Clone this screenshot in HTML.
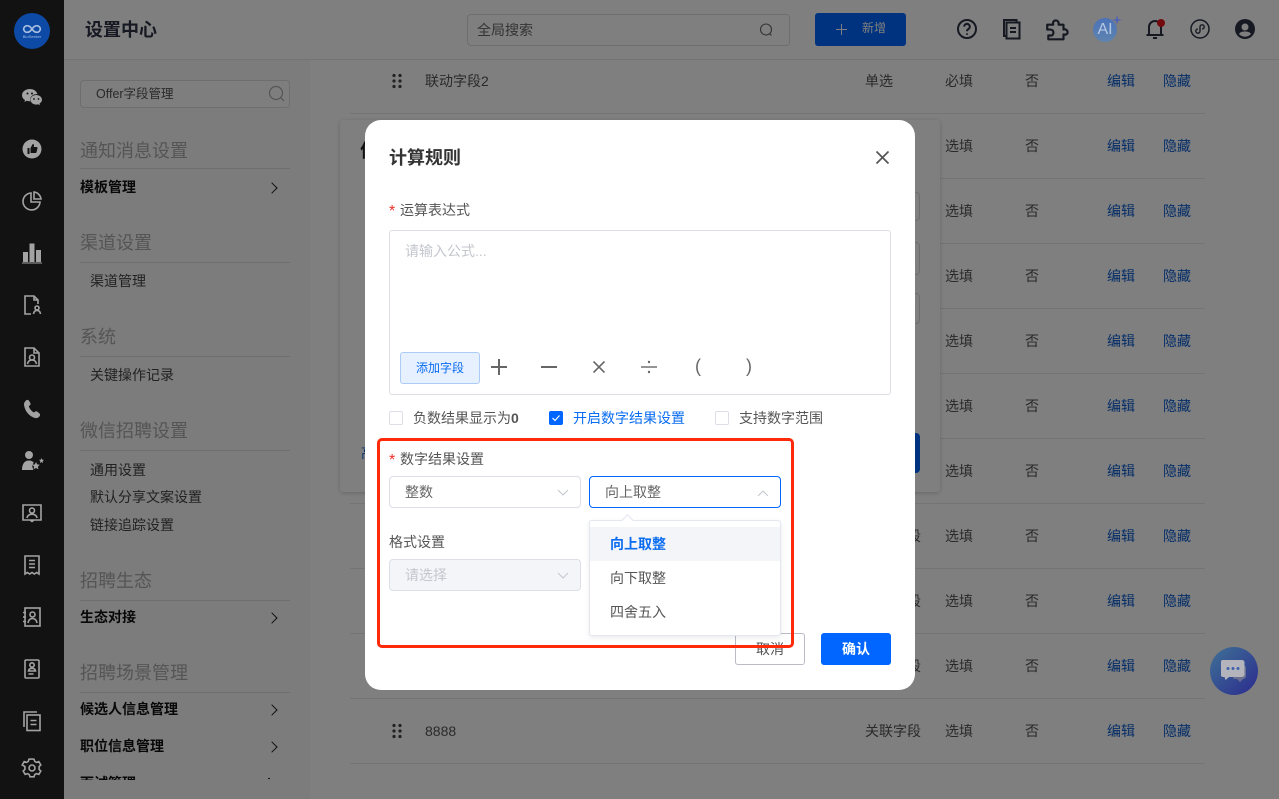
<!DOCTYPE html>
<html lang="zh"><head><meta charset="utf-8"><title>设置中心</title>
<style>
*{box-sizing:border-box}
html,body{margin:0;padding:0}
body{width:1279px;height:799px;overflow:hidden;position:relative;background:#fff;font-family:"Liberation Sans","Noto Sans CJK SC",sans-serif;color:#333;font-size:14px}
.a{position:absolute;white-space:nowrap}
.side{position:absolute;left:0;top:0;width:64px;height:799px;background:#121212;z-index:5}
.side svg{position:absolute;left:20px;width:24px;height:24px;fill:none;stroke:#a3a3a3;stroke-width:1.6}
.ov{position:absolute;inset:0;background:rgba(0,0,0,.5);z-index:3}
.nav{position:absolute;left:64px;top:60px;width:246px;height:739px;background:#f8f8fa;overflow:hidden}
.sec{position:absolute;left:16px;width:210px;height:32px;border-bottom:1px solid #ddd;color:#aaa;font-size:18px;line-height:26px;padding-top:1px}
.b{position:absolute;left:16px;font-weight:700;color:#111;line-height:20px}
.i{position:absolute;left:26px;color:#444;line-height:20px}
.chev{position:absolute;left:204px;width:8px;height:8px;border-top:1px solid #222;border-right:1px solid #222;transform:rotate(45deg)}
.line{position:absolute;left:350px;width:855px;height:1px;background:#e8e8ec}
.r{position:absolute;line-height:20px;color:#555;white-space:nowrap}
.l{color:#0a5cd0}
.top svg{position:absolute;top:17px;width:24px;height:24px;fill:none;stroke:#2c3344;stroke-width:2}
.top{position:absolute;inset:0}
.m{position:absolute;left:365px;top:120px;width:550px;height:570px;background:#fff;border-radius:16px;z-index:6}
.ab{position:absolute;white-space:nowrap;line-height:20px}
.sel{position:absolute;height:32px;width:192px;border:1px solid #dcdfe8;border-radius:4px;background:#fff;color:#666;line-height:30px;padding-left:15px}
.sel svg{position:absolute;right:10px;top:9px;width:14px;height:14px;fill:none;stroke:#c4c7d0;stroke-width:1}
.cb{position:absolute;top:291px;width:14px;height:14px;border:1px solid #dcdfe8;border-radius:2px;background:#fff}
</style></head><body>

<div class="nav">
  <div style="position:absolute;left:16px;top:20px;width:210px;height:28px;border:1px solid #ddd;border-radius:4px;background:#fcfcfd;color:#555;font-size:12.5px;line-height:27px;padding-left:15px">Offer字段管理
    <svg style="position:absolute;right:3px;top:4px" width="18" height="18" viewBox="0 0 18 18" fill="none" stroke="#aaa" stroke-width="1.2"><circle cx="8" cy="8" r="6.5"/><path d="M13 13l3 3"/></svg>
  </div>
  <div class="sec" style="top:77px">通知消息设置</div>
  <div class="b" style="top:117px">模板管理</div><div class="chev" style="top:124px"></div>
  <div class="sec" style="top:169px;height:34px">渠道设置</div>
  <div class="i" style="top:211px">渠道管理</div>
  <div class="sec" style="top:263px;height:34px">系统</div>
  <div class="i" style="top:305px">关键操作记录</div>
  <div class="sec" style="top:357px;height:34px">微信招聘设置</div>
  <div class="i" style="top:400px">通用设置</div>
  <div class="i" style="top:427px">默认分享文案设置</div>
  <div class="i" style="top:455px">链接追踪设置</div>
  <div class="sec" style="top:507px;height:34px">招聘生态</div>
  <div class="b" style="top:547px">生态对接</div><div class="chev" style="top:554px"></div>
  <div class="sec" style="top:599px;height:34px">招聘场景管理</div>
  <div class="b" style="top:639px">候选人信息管理</div><div class="chev" style="top:646px"></div>
  <div class="b" style="top:676px">职位信息管理</div><div class="chev" style="top:683px"></div>
  <div class="b" style="top:713px;height:7px;overflow:hidden">面试管理</div><div class="chev" style="top:718px;height:2px;border-right:0;transform:none;width:2px;border-top:1px solid #222"></div>
</div>

<div style="position:absolute;left:64px;top:59px;width:1215px;height:1px;background:#e9e9ec"></div>
<div class="a" style="left:85px;top:17px;font-size:18px;font-weight:700;color:#2c3344;line-height:26px">设置中心</div>
<div style="position:absolute;left:467px;top:14px;width:323px;height:32px;border:1px solid #ddd;border-radius:4px;color:#666;line-height:30px;padding-left:9px">全局搜索
  <svg style="position:absolute;right:16px;top:8px" width="14" height="14" viewBox="0 0 14 14" fill="none" stroke="#666" stroke-width="1.1"><circle cx="7" cy="6.5" r="5.5"/><path d="M10.5 10.5l2 2"/></svg>
</div>
<div style="position:absolute;left:815px;top:13px;width:91px;height:33px;background:#0066ff;border-radius:3px;color:#fff;font-size:12px;line-height:31px;padding-left:47px">新增
  <svg style="position:absolute;left:21px;top:11px" width="11" height="11" viewBox="0 0 11 11" stroke="#fff" stroke-width="1"><path d="M5.5 0v11M0 5.500h11"/></svg>
</div>

<div class="top">
  <svg style="left:955px" viewBox="0 0 24 24"><circle cx="12" cy="12" r="9"/><path d="M9.2 9.6a2.8 2.800 0 1 1 4.300 2.400c-1 .6-1.500 1.200-1.500 2.200"/><path d="M12 16.400v1.400"/></svg>
  <svg style="left:1000px" viewBox="0 0 24 24"><path d="M6 19H4V3h12.500v2.500"/><rect x="6.500" y="5.500" width="13" height="16"/><path d="M10 11h6M10 15h6"/></svg>
  <svg style="left:1044px;width:26px;height:26px;top:16px" viewBox="0 0 24 24"><path d="M3 8h5.500C7 3 14.500 2.500 13.500 8H18v4.500c4.500-1.500 5.500 6 0 4.500v4.500H4v-3.500h2.500c3 0 3-5.500-.5-5.500H3z" stroke-linejoin="round"/></svg>
  <svg style="left:1143px" viewBox="0 0 24 24"><path d="M6 18V10a6 6 0 0 1 12 0v8M3.500 18h17M10 21h4"/></svg>
  <div style="position:absolute;left:1157px;top:19px;width:8px;height:8px;border-radius:50%;background:#e8141c"></div>
  <svg style="left:1188px;stroke-width:1.5" viewBox="0 0 24 24"><circle cx="12" cy="12" r="9"/><path d="M8.800 12a2.100 2.100 0 1 0 2.200 2.100V9.900a2.100 2.100 0 1 1 2.100 2.100" stroke-width="1.400" transform="translate(1 0)"/></svg>
  <svg style="left:1233px;stroke:none;fill:#2c3344" viewBox="0 0 24 24"><path fill-rule="evenodd" d="M12 2a10 10 0 1 0 0 20 10 10 0 0 0 0-20zm0 4.500a3.500 3.500 0 1 1 0 7 3.500 3.500 0 0 1 0-7zM6 17c1-2 3.500-2.500 6-2.500s5 .5 6 2.500a8 8 0 0 1-12 0z"/></svg>
</div>

<div class="line" style="top:113px"></div><div class="line" style="top:178px"></div><div class="line" style="top:243px"></div><div class="line" style="top:308px"></div><div class="line" style="top:373px"></div><div class="line" style="top:438px"></div><div class="line" style="top:503px"></div><div class="line" style="top:568px"></div><div class="line" style="top:633px"></div><div class="line" style="top:698px"></div><div class="line" style="top:763px"></div>

<div class="r" style="left:425px;top:71px">联动字段2</div><div class="r" style="left:865px;top:71px">单选</div><div class="r" style="left:945px;top:71px">必填</div><div class="r" style="left:1025px;top:71px">否</div><div class="r l" style="left:1107px;top:71px">编辑</div><div class="r l" style="left:1163px;top:71px">隐藏</div>
<div class="r" style="left:945px;top:136px">选填</div><div class="r" style="left:1025px;top:136px">否</div><div class="r l" style="left:1107px;top:136px">编辑</div><div class="r l" style="left:1163px;top:136px">隐藏</div>
<div class="r" style="left:945px;top:201px">选填</div><div class="r" style="left:1025px;top:201px">否</div><div class="r l" style="left:1107px;top:201px">编辑</div><div class="r l" style="left:1163px;top:201px">隐藏</div>
<div class="r" style="left:945px;top:266px">选填</div><div class="r" style="left:1025px;top:266px">否</div><div class="r l" style="left:1107px;top:266px">编辑</div><div class="r l" style="left:1163px;top:266px">隐藏</div>
<div class="r" style="left:945px;top:331px">选填</div><div class="r" style="left:1025px;top:331px">否</div><div class="r l" style="left:1107px;top:331px">编辑</div><div class="r l" style="left:1163px;top:331px">隐藏</div>
<div class="r" style="left:945px;top:396px">选填</div><div class="r" style="left:1025px;top:396px">否</div><div class="r l" style="left:1107px;top:396px">编辑</div><div class="r l" style="left:1163px;top:396px">隐藏</div>
<div class="r" style="left:945px;top:461px">选填</div><div class="r" style="left:1025px;top:461px">否</div><div class="r l" style="left:1107px;top:461px">编辑</div><div class="r l" style="left:1163px;top:461px">隐藏</div>
<div class="r" style="left:865px;top:526px">关联字段</div><div class="r" style="left:945px;top:526px">选填</div><div class="r" style="left:1025px;top:526px">否</div><div class="r l" style="left:1107px;top:526px">编辑</div><div class="r l" style="left:1163px;top:526px">隐藏</div>
<div class="r" style="left:865px;top:591px">关联字段</div><div class="r" style="left:945px;top:591px">选填</div><div class="r" style="left:1025px;top:591px">否</div><div class="r l" style="left:1107px;top:591px">编辑</div><div class="r l" style="left:1163px;top:591px">隐藏</div>
<div class="r" style="left:865px;top:656px">关联字段</div><div class="r" style="left:945px;top:656px">选填</div><div class="r" style="left:1025px;top:656px">否</div><div class="r l" style="left:1107px;top:656px">编辑</div><div class="r l" style="left:1163px;top:656px">隐藏</div>
<div class="r" style="left:425px;top:721px">8888</div><div class="r" style="left:865px;top:721px">关联字段</div><div class="r" style="left:945px;top:721px">选填</div><div class="r" style="left:1025px;top:721px">否</div><div class="r l" style="left:1107px;top:721px">编辑</div><div class="r l" style="left:1163px;top:721px">隐藏</div>

<svg style="position:absolute;left:392px;top:73px" width="10" height="16" fill="#444"><circle cx="2" cy="2.500" r="1.600"/><circle cx="8" cy="2.500" r="1.600"/><circle cx="2" cy="8" r="1.600"/><circle cx="8" cy="8" r="1.600"/><circle cx="2" cy="13.500" r="1.600"/><circle cx="8" cy="13.500" r="1.600"/></svg>
<svg style="position:absolute;left:392px;top:723px" width="10" height="16" fill="#444"><circle cx="2" cy="2.500" r="1.600"/><circle cx="8" cy="2.500" r="1.600"/><circle cx="2" cy="8" r="1.600"/><circle cx="8" cy="8" r="1.600"/><circle cx="2" cy="13.500" r="1.600"/><circle cx="8" cy="13.500" r="1.600"/></svg>

<div style="position:absolute;left:340px;top:120px;width:600px;height:372px;background:#fff;border-radius:3px;box-shadow:0 1px 4px rgba(0,0,0,.2)">
  <div class="a" style="left:20px;top:18px;font-size:18px;font-weight:700;color:#222;line-height:26px">信</div>
  <div class="a" style="left:21px;top:323px;color:#0a5cd0;line-height:20px">高</div>
  <div style="position:absolute;left:540px;top:72px;width:40px;height:29px;border:1px solid #ddd;border-radius:4px"></div>
  <div style="position:absolute;left:540px;top:122px;width:40px;height:33px;border:1px solid #ddd;border-radius:4px"></div>
  <div style="position:absolute;left:540px;top:173px;width:40px;height:31px;border:1px solid #ddd;border-radius:4px"></div>
  <div style="position:absolute;left:540px;top:313px;width:40px;height:40px;background:#0066ff;border-radius:4px"></div>
</div>

<div class="ov"></div>

<!-- AI badge above dim layer -->
<div style="position:absolute;left:1093px;top:18px;width:24px;height:24px;border-radius:50%;background:linear-gradient(180deg,#4a72b8,#5f84b0);color:#b4c8e4;font-size:16px;font-weight:400;line-height:24px;text-align:center;z-index:4">AI</div>
<svg style="position:absolute;left:1112px;top:15px;z-index:4" width="10" height="10" viewBox="0 0 10 10" fill="#4f62b8"><path d="M5 0l1 4 4 1-4 1-1 4-1-4-4-1 4-1z"/></svg>

<!-- chat bubble -->
<div style="position:absolute;left:1210px;top:647px;width:48px;height:48px;border-radius:50%;background:linear-gradient(135deg,#3f7296,#2b2a8e);z-index:4"></div>
<svg style="position:absolute;left:1221px;top:659px;z-index:4" width="28" height="26" viewBox="0 0 28 26"><path d="M16 6h6a3 3 0 0 1 3 3v8a3 3 0 0 1-3 3l-3 3-3-3h-4z" fill="#6a6f90"/><path d="M3 1h19a2.500 2.500 0 0 1 2.500 2.500v12a2.500 2.500 0 0 1-2.500 2.500H9l-3.500 3-1-3H3a2.500 2.500 0 0 1-2.500-2.500v-12A2.500 2.500 0 0 1 3 1z" fill="#b4b4bc" transform="translate(-1 0)"/><circle cx="7" cy="9.500" r="1.500" fill="#3f62ac"/><circle cx="12" cy="9.500" r="1.500" fill="#3f62ac"/><circle cx="17" cy="9.500" r="1.500" fill="#3f62ac"/></svg>

<!-- sidebar -->
<div class="side">
  <div style="position:absolute;left:14px;top:13px;width:36px;height:36px;border-radius:50%;background:#0c4aa6"></div>
  <svg style="left:22px;top:23px;width:20px;height:12px;stroke:#a8bfe0;stroke-width:2" viewBox="0 0 24 14"><path d="M12 7c-2-3-4-4-6-4S2 5 2 7s2 4 4 4 4-1 6-4 4-4 6-4 4 2 4 4-2 4-4 4-4-1-6-4z"/></svg>
  <div style="position:absolute;left:14px;top:33px;width:36px;text-align:center;font-size:4px;color:#a8bfe0;line-height:8px">BioSeeker</div>
  <svg style="top:85px;stroke:none;fill:#a3a3a3" viewBox="0 0 24 24"><path d="M10 4c-4.700 0-8 2.800-8 6.200 0 2 1.200 3.700 3 4.800l-.6 2 2.300-1.200c1 .3 2 .4 3 .4h.6a5 5 0 0 1-.2-1.500c0-3.200 3-5.600 6.700-5.600h.6C16.600 6 13.600 4 10 4z"/><path d="M22 14.800c0-2.600-2.600-4.800-5.800-4.800s-5.800 2.200-5.800 4.800 2.600 4.800 5.800 4.800c.7 0 1.400-.1 2-.3l1.800 1-.5-1.700c1.500-.9 2.500-2.300 2.500-3.800z"/><circle cx="7.500" cy="8.500" r="1" fill="#121212"/><circle cx="12" cy="8.500" r="1" fill="#121212"/><circle cx="14" cy="14" r=".9" fill="#121212"/><circle cx="18.500" cy="14" r=".9" fill="#121212"/></svg>
  <svg style="top:137px;stroke:none;fill:#a3a3a3" viewBox="0 0 24 24"><path fill-rule="evenodd" d="M12 2.500a9.500 9.500 0 1 0 0 19 9.500 9.500 0 0 0 0-19zM7.500 11h2v6h-2zM10.500 11l2.200-4c1 0 1.500.7 1.300 1.700l-.3 1.300h2.800c.7 0 1.100.6 1 1.200l-1 4c-.2.500-.6.800-1.100.8h-4.900z"/></svg>
  <svg style="top:189px" viewBox="0 0 24 24"><path d="M11 4a8.500 8.500 0 1 0 9 9h-9z"/><path d="M14 3a8 8 0 0 1 7 7h-7z"/></svg>
  <svg style="top:241px;stroke:none;fill:#a3a3a3" viewBox="0 0 24 24"><path d="M3 11h5v10H3zM9.500 2.500h5V21h-5zM16 9h5v12h-5zM2 21.500h20v1H2z"/></svg>
  <svg style="top:293px" viewBox="0 0 24 24"><path d="M18 11V7l-4-4H5v18h6M14 3v4h4"/><circle cx="17" cy="15" r="2"/><path d="M13.500 21c.3-2.500 1.500-3.500 3.500-3.500s3.200 1 3.500 3.500"/></svg>
  <svg style="top:345px" viewBox="0 0 24 24"><path d="M19 21H5V3h9l5 5zM14 3v5h5"/><circle cx="12" cy="12.500" r="2.500"/><path d="M7.500 19c.5-2.700 2-4 4.500-4s4 1.300 4.500 4"/></svg>
  <svg style="top:397px;stroke:none;fill:#a3a3a3" viewBox="0 0 24 24"><path d="M6 3.500c1-1 2.300-.8 3 .2l1.300 2.200c.5.900.3 1.800-.5 2.500l-1 .9c.8 2.500 2.700 4.900 5 6.200l1.100-.8c.8-.6 1.800-.6 2.500 0l2 1.700c.9.800.9 2.100.1 3-1 1.200-2.500 2-4 1.700C9.500 19.800 4.500 14 4 7.300 4 5.900 4.800 4.500 6 3.500z"/></svg>
  <svg style="top:449px;stroke:none;fill:#a3a3a3" viewBox="0 0 24 24"><circle cx="9" cy="6" r="4"/><path d="M2 21c0-6 2.500-9.500 7-9.500 2 0 3.600.7 4.700 2l-1.500 3.500 1 3.500.2.500z"/><path d="M16 13l1.200 2.400 2.600.4-1.900 1.800.5 2.600-2.400-1.200-2.400 1.200.5-2.600-1.900-1.800 2.600-.4zM21.500 9l.8 1.700 1.700.2-1.300 1.300.3 1.800-1.500-.9-1.500.9.300-1.800-1.300-1.300 1.700-.2z"/></svg>
  <svg style="top:501px" viewBox="0 0 24 24"><path d="M3 4h18v15H3zM10 19l2 1.500L14 19"/><circle cx="12" cy="9.500" r="2.500"/><path d="M7 17c.5-2.500 2.300-3.800 5-3.800s4.500 1.300 5 3.800"/></svg>
  <svg style="top:553px" viewBox="0 0 24 24"><path d="M5 3h14v18l-2.300-1.500L14.300 21 12 19.500 9.700 21l-2.400-1.500L5 21zM9 7.500h6M9 11h6M9 14.500h6"/></svg>
  <svg style="top:605px" viewBox="0 0 24 24"><rect x="5" y="3" width="15" height="18"/><circle cx="12.500" cy="9.500" r="2.500"/><path d="M8 18c.5-3 2-4.500 4.500-4.500s4 1.500 4.500 4.500M3 7.500h3M3 12h3M3 16.500h3"/></svg>
  <svg style="top:657px" viewBox="0 0 24 24"><rect x="5" y="3" width="14" height="18" rx="1"/><circle cx="12" cy="8" r="2.200"/><path d="M8.500 14c.3-1.800 1.700-2.700 3.500-2.700s3.200.9 3.500 2.700zM8.500 17h5"/></svg>
  <svg style="top:709px" viewBox="0 0 24 24"><path d="M4 18V3h13"/><rect x="7" y="6" width="13" height="15.500"/><path d="M10.500 11.500h6M10.500 15.500h6"/></svg>
  <svg style="top:756px" viewBox="0 0 24 24"><path d="M12 3l2 .2.8 2.300 1.700.9 2.300-.8 2 3.400-1.700 1.600v2.800l1.700 1.600-2 3.400-2.300-.8-1.700.9-.8 2.300h-4l-.8-2.300-1.700-.9-2.300.8-2-3.400 1.700-1.600v-2.800L2.200 9l2-3.400 2.300.8 1.700-.9.800-2.300z"/><circle cx="12" cy="12" r="3"/></svg>
</div>

<!-- modal -->
<div class="m">
  <div class="ab" style="left:24px;top:25px;font-size:18px;font-weight:700;color:#333;line-height:26px">计算规则</div>
  <svg style="position:absolute;left:511px;top:31px" width="13" height="13" viewBox="0 0 13 13" stroke="#555" stroke-width="1.700"><path d="M.5.500l12 12M12.500.500l-12 12"/></svg>
  <div class="ab" style="left:24px;top:82px;color:#f0302a;font-size:16px">*</div>
  <div class="ab" style="left:35px;top:80px;color:#555">运算表达式</div>
  <div style="position:absolute;left:24px;top:110px;width:502px;height:165px;border:1px solid #dcdfe8;border-radius:3px"></div>
  <div class="ab" style="left:40px;top:121px;color:#c4c6ce">请输入公式...</div>
  <div style="position:absolute;left:35px;top:232px;width:80px;height:32px;background:#e6f0ff;border:1px solid #a9cdf6;border-radius:3px;color:#0a6cf0;font-size:12px;line-height:30px;text-align:center">添加字段</div>
  <svg style="position:absolute;left:126px;top:239px" width="16" height="16" stroke="#666" stroke-width="2"><path d="M8 0v16M0 8h16"/></svg>
  <svg style="position:absolute;left:176px;top:239px" width="16" height="16" stroke="#666" stroke-width="2"><path d="M0 8h16"/></svg>
  <svg style="position:absolute;left:228px;top:241px" width="12" height="12" stroke="#666" stroke-width="1.600"><path d="M.5.500l11 11M11.500.500l-11 11"/></svg>
  <svg style="position:absolute;left:276px;top:239px" width="16" height="16" stroke="#666" stroke-width="1.400" fill="#666"><path d="M0 8h16"/><circle cx="8" cy="3" r=".5"/><circle cx="8" cy="13" r=".5"/></svg>
  <div class="ab" style="left:330px;top:236px;color:#666;font-size:18px">(</div>
  <div class="ab" style="left:381px;top:236px;color:#666;font-size:18px">)</div>

  <div class="cb" style="left:24px"></div>
  <div class="ab" style="left:48px;top:288px;color:#555">负数结果显示为<b style="font-weight:700">0</b></div>
  <div class="cb" style="left:184px;background:#0066ff;border-color:#0066ff"><svg style="position:absolute;left:1px;top:1px" width="10" height="10" stroke="#fff" stroke-width="1.200" fill="none"><path d="M1.500 5l2.500 2.500 4.500-5"/></svg></div>
  <div class="ab" style="left:208px;top:288px;color:#0a6cf0">开启数字结果设置</div>
  <div class="cb" style="left:350px"></div>
  <div class="ab" style="left:374px;top:288px;color:#555">支持数字范围</div>

  <div style="position:absolute;left:370px;top:513px;width:70px;height:32px;border:1px solid #b9bbc6;border-radius:3px;color:#555;line-height:30px;text-align:center">取消</div>
  <div style="position:absolute;left:456px;top:513px;width:70px;height:32px;background:#0066ff;border-radius:3px;color:#fff;font-weight:700;line-height:32px;text-align:center">确认</div>

  <div class="ab" style="left:24px;top:331px;color:#f0302a;font-size:16px">*</div>
  <div class="ab" style="left:35px;top:329px;color:#555">数字结果设置</div>
  <div class="sel" style="left:24px;top:356px">整数<svg viewBox="0 0 14 14"><path d="M2 4l5 5 5-5"/></svg></div>
  <div class="sel" style="left:224px;top:356px;border-color:#0066ff">向上取整<svg viewBox="0 0 14 14"><path d="M2 10l5-5 5 5"/></svg></div>
  <div class="ab" style="left:24px;top:412px;color:#555">格式设置</div>
  <div class="sel" style="left:24px;top:439px;background:#f4f5f9;color:#c4c6ce">请选择<svg viewBox="0 0 14 14"><path d="M2 4l5 5 5-5"/></svg></div>

  <div style="position:absolute;left:224px;top:400px;width:192px;height:116px;background:#fff;border:1px solid #e4e6f0;border-radius:3px;box-shadow:0 2px 6px rgba(0,0,0,.08)">
    <div style="position:absolute;left:33px;top:-5px;width:9px;height:9px;background:#fff;border-left:1px solid #e4e6f0;border-top:1px solid #e4e6f0;transform:rotate(45deg)"></div>
    <div style="position:absolute;left:0;top:6px;width:190px;height:34px;background:#f4f5f9;color:#0a6cf0;font-weight:700;line-height:34px;padding-left:20px">向上取整</div>
    <div style="position:absolute;left:20px;top:40px;line-height:34px;color:#555">向下取整</div>
    <div style="position:absolute;left:20px;top:74px;line-height:34px;color:#555">四舍五入</div>
  </div>
  <div style="position:absolute;left:12px;top:318px;width:417px;height:210px;border:3px solid #ff2a0a;border-radius:5px"></div>
</div>
</body></html>
